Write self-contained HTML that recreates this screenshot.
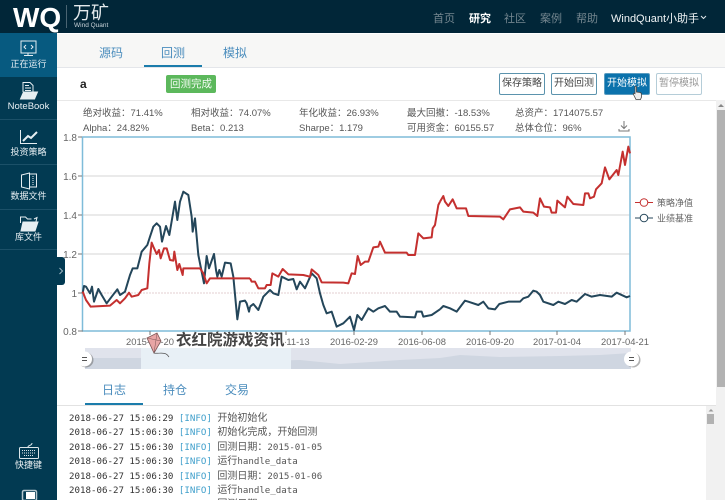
<!DOCTYPE html>
<html lang="zh">
<head>
<meta charset="utf-8">
<title>WindQuant</title>
<style>
html,body{margin:0;padding:0;width:725px;height:500px;overflow:hidden;background:#fff}
body{position:relative;font-family:"Liberation Sans","Noto Sans CJK SC",sans-serif;font-size:11px;color:#555}
.a{position:absolute;white-space:nowrap}
.btn{position:absolute;top:73px;height:20px;width:44px;border:1px solid #5b93ad;border-radius:2px;font-size:10px;line-height:20px;text-align:center;color:#444;background:#fff}
.s{position:absolute;white-space:nowrap;font-family:"Liberation Sans","Noto Sans CJK TC",sans-serif;font-size:9.5px;color:#555;line-height:14.5px}
.side{position:absolute;left:0;width:57px;text-align:center;color:#e8f0f4;font-size:9px;line-height:14px;white-space:nowrap}
.sep{position:absolute;left:0;width:57px;height:1px;background:#1b5068}
.tab{position:absolute;font-size:12px;color:#4b8dbd;transform:translateX(-50%);white-space:nowrap}
.nav{position:absolute;top:10px;font-size:11px;color:#74868f;transform:translateX(-50%);white-space:nowrap}
.log{position:absolute;left:69px;font:9.14px/14px "DejaVu Sans Mono","Noto Sans CJK TC",monospace;color:#333;white-space:pre}
.log b{font-weight:normal;color:#3f9fcb}
.log i{font-style:normal;color:#555;font-size:10px;font-family:"Noto Sans CJK TC",sans-serif}
.log em{font-style:normal;font-size:9.14px;font-family:"DejaVu Sans Mono",monospace}
</style>
</head>
<body>
<!-- top nav -->
<div class="a" style="left:0;top:0;width:725px;height:33px;background:#012638"></div>
<div class="a" style="left:13px;top:3px;font:bold 28px/30px 'Liberation Sans',sans-serif;color:#fff">WQ</div>
<div class="a" style="left:66px;top:5px;width:1px;height:23px;background:#4a6472"></div>
<div class="a" style="left:73px;top:3px;font-size:18px;line-height:20px;color:#e4e9ec">万矿</div>
<div class="a" style="left:74px;top:22px;font-size:6.500px;line-height:7px;color:#c8d2d8">Wind Quant</div>
<div class="nav" style="left:444px">首页</div>
<div class="nav" style="left:480px;color:#fff;font-weight:bold">研究</div>
<div class="nav" style="left:515px">社区</div>
<div class="nav" style="left:551px">案例</div>
<div class="nav" style="left:587px">帮助</div>
<div class="a" style="left:611px;top:10px;font-size:11px;color:#f0f4f6">WindQuant小助手</div>
<svg class="a" style="left:700px;top:15px" width="7" height="5"><path d="M1 1l2.500 2.500L6 1" fill="none" stroke="#dfe6ea" stroke-width="1"/></svg>

<!-- sidebar -->
<div class="a" style="left:0;top:33px;width:57px;height:467px;background:#023a52"></div>
<div class="a" style="left:0;top:33px;width:57px;height:44px;background:#075a80"></div>
<div class="sep" style="top:119px"></div><div class="sep" style="top:164px"></div><div class="sep" style="top:209px"></div><div class="sep" style="top:249px"></div>
<svg class="a" style="left:0;top:33px" width="57" height="220" fill="none" stroke="#e6eef2" stroke-width="1">
<rect x="21" y="8" width="15" height="12"/><path d="M26 12l-2 2 2 2M31 12l2 2-2 2M28 20v2M24 22.500h9"/>
<path d="M23 59v-9.500h7l3 3V59"/><path d="M20.500 66l3-7h14l-3 7z" fill="#e6eef2"/><path d="M25 52.500h4M25 55h6M25 57.500h6"/>
<path d="M20.500 97v13.500H37"/><path d="M23 108l5-5 3 2 6-6" stroke-width="2"/>
<path d="M21.500 142l8-2v16l-8-2zM30 141h6.500v13H30"/><path d="M33 143v9" stroke-dasharray="1 1"/>
<path d="M20.500 190v-6h5l2 2h4M34 186l3-1.500-1 4"/><path d="M21 198l2-9h15l-3 9z" fill="#e6eef2"/>
</svg>
<div class="side" style="top:57px">正在运行</div>
<div class="side" style="top:100px;font-size:9.500px">NoteBook</div>
<div class="side" style="top:145px">投资策略</div>
<div class="side" style="top:189px">数据文件</div>
<div class="side" style="top:230px">库文件</div>
<div class="a" style="left:57px;top:257px;width:8px;height:28px;background:#023a52;border-radius:0 3px 3px 0"></div>
<svg class="a" style="left:58px;top:267px" width="6" height="8"><path d="M1.500 1l3 3-3 3" fill="none" stroke="#9fb7c3" stroke-width="1"/></svg>
<svg class="a" style="left:17px;top:438px" width="24" height="62" fill="none" stroke="#dce6ea" stroke-width="1">
<rect x="2.500" y="9.500" width="19" height="11" rx="1"/><path d="M5 12.500h14M5 15h14M7 17.500h10" stroke-dasharray="1 1"/><path d="M11 9c0-2 4-1 4-4"/>
<rect x="5.500" y="52.500" width="14" height="10" rx="1.500" stroke-width="1.500" stroke="#b5c6ce"/><rect x="9" y="54" width="9" height="7" fill="#fff" stroke="none"/>
</svg>
<div class="side" style="top:458px;color:#f0f4f6">快捷键</div>

<!-- tab band -->
<div class="a" style="left:57px;top:34px;width:668px;height:33px;background:#f7f7f6;border-bottom:1px solid #e4e6ea"></div>
<div class="tab" style="left:111px;top:44px">源码</div>
<div class="tab" style="left:173px;top:44px">回测</div>
<div class="tab" style="left:235px;top:44px">模拟</div>
<div class="a" style="left:144px;top:65px;width:58px;height:2px;background:#1b7cab"></div>

<!-- toolbar -->
<div class="a" style="left:80px;top:77px;font-weight:bold;font-size:12px;color:#222">a</div>
<div class="a" style="left:166px;top:75px;width:50px;height:18px;background:#5cb85c;border-radius:2px;color:#f4fbf4;font-size:10.500px;line-height:18px;text-align:center">回测完成</div>
<div class="btn" style="left:499px">保存策略</div>
<div class="btn" style="left:551px">开始回测</div>
<div class="btn" style="left:604px;background:#0b72ac;border-color:#5a9cc0;color:#fff">开始模拟</div>
<div class="btn" style="left:656px;color:#999;border-color:#b5cdd8">暂停模拟</div>
<div class="a" style="left:57px;top:100px;width:659px;height:1px;background:#e8e8e8"></div>

<!-- stats -->
<div class="s" style="left:83px;top:107px">绝对收益：71.41%<br>Alpha：24.82%</div>
<div class="s" style="left:191px;top:107px">相对收益：74.07%<br>Beta：0.213</div>
<div class="s" style="left:299px;top:107px">年化收益：26.93%<br>Sharpe：1.179</div>
<div class="s" style="left:407px;top:107px">最大回撤：-18.53%<br>可用资金：60155.57</div>
<div class="s" style="left:515px;top:107px">总资产：1714075.57<br>总体仓位：96%</div>
<svg class="a" style="left:618px;top:120px" width="12" height="12" fill="none" stroke="#777" stroke-width="1"><path d="M6 1v7M3 5.500L6 8.500l3-3M1 9v2h10V9"/></svg>

<!-- chart -->
<svg class="a" style="left:0;top:130px" width="725" height="245">
<g transform="translate(0,-130)">
<rect x="83" y="137" width="547" height="194" fill="#fff"/>
<path d="M83 176H630M83 215H630M83 254H630" stroke="#e4e4e4" stroke-width="1.500"/>
<path d="M83 293H630" stroke="#e3cfd2" stroke-width="1" stroke-dasharray="2 1"/>
<path d="M82.500 137H630V331H82.500Z" fill="none" stroke="#7fbcd9" stroke-width="1.500"/>
<path d="M78 137h4M78 176h4M78 215h4M78 254h4M78 293h4M78 331h5M354 331v4M422 331v4M490 331v4M557 331v4M625 331v4M218 331v4M150 331v4M286 331v4" stroke="#777" stroke-width="1"/>
<g font-family="Liberation Sans,sans-serif" font-size="10" fill="#666" text-anchor="end">
<text x="77" y="141">1.8</text><text x="77" y="180">1.6</text><text x="77" y="219">1.4</text><text x="77" y="258">1.2</text><text x="77" y="297">1</text><text x="77" y="335">0.8</text>
</g>
<g font-family="Liberation Sans,sans-serif" font-size="9.400" fill="#666" text-anchor="middle">
<text x="150" y="345">2015-04-20</text><text x="286" y="345">2015-11-13</text><text x="354" y="345">2016-02-29</text><text x="422" y="345">2016-06-08</text><text x="490" y="345">2016-09-20</text><text x="557" y="345">2017-01-04</text><text x="625" y="345">2017-04-21</text>
</g>
<!-- navigator -->
<rect x="85" y="348" width="546" height="21" fill="#e0e3ec"/>
<path d="M85 358L140 358 180 353 220 358 240 360 260 361 300 360 340 364 400 360 440 358 460 355 500 357 560 356 600 355 631 353V369H85Z" fill="#cfd6e1"/>
<rect x="141" y="348" width="150" height="21" fill="#e8f0f6"/>
<rect x="175" y="332" width="110" height="16" fill="#fff"/>
<g fill="none" stroke-width="2" stroke-linejoin="round">
<!-- benchmark -->
<g stroke="#24465a">
<polyline transform="translate(60,130) scale(.33333)" stroke-width="6" points="68,490 72,468 78,470 90,490 96,470 102,515 115,477 125,495 140,520 155,500 172,478 180,495 195,485 210,435 218,415 232,415 245,365 262,345 270,320 280,290 290,280 300,290 306,335 318,288 328,315 345,215 352,270 360,215 370,185 385,195 395,260 398,305 405,265 415,375 422,410 432,460 440,378 447,415 462,372 468,420 472,440 478,420 485,440 495,398 512,400 520,440 532,568 540,515 555,512 560,520 567,545 570,530"/>
<polyline transform="translate(250,130) scale(.33333)" stroke-width="6" points="0,530 10,522 25,540 40,500 50,490 60,480 70,490 85,495 95,440 105,445 115,450 130,447 140,478 150,455 165,475 185,430 200,445 210,490 220,525 230,550 245,545 260,590 280,580 300,560 312,600 322,555 335,570 355,535 370,545 385,535 405,528 420,545 440,545 450,560 495,562 500,545 515,545 520,560 545,555 570,538"/>
<polyline transform="translate(440,130) scale(.33333)" stroke-width="6" points="0,538 10,528 30,535 50,545 75,512 85,515 115,525 130,515 145,535 165,538 178,522 205,515 240,515 250,505 265,500 280,482 290,485 300,495 310,515 340,525 355,515 375,522 395,510 410,515 435,492 455,500 480,495 515,500 530,488 560,502 570,498"/>
</g>
<!-- strategy -->
<g stroke="#c4302f">
<polyline transform="translate(60,130) scale(.33333)" stroke-width="6" points="68,485 78,510 92,530 150,527 170,510 180,520 195,505 207,488 215,500 235,495 245,480 262,475 268,400 275,338 280,350 290,372 297,360 302,385 312,355 320,355 330,390 340,392 343,365 352,420 358,402 368,435 370,415 420,415 430,430 440,460 450,445 570,445"/>
<polyline transform="translate(250,130) scale(.33333)" stroke-width="6" points="0,445 5,455 15,455 25,475 45,475 50,465 62,465 67,430 85,440 98,417 115,433 160,435 180,440 185,418 205,435 215,457 280,458 295,460 305,430 315,432 323,378 332,405 345,395 355,395 370,352 385,350 390,335 405,368 470,368 475,375 495,375 505,310 520,325 545,322 548,295 555,285 565,225 570,215"/>
<polyline transform="translate(440,130) scale(.33333)" stroke-width="6" points="0,215 10,198 15,215 25,228 38,208 50,235 78,235 85,258 180,260 190,268 210,238 240,232 250,245 280,248 292,258 300,205 312,230 330,232 335,248 348,248 352,212 375,232 382,200 400,222 430,225 435,190 445,190 450,205 462,200 468,178 485,160 495,112 508,148 530,120 535,135 548,65 555,105 565,50 570,70"/>
</g>
</g>
<!-- legend -->
<g fill="#fff" stroke-width="1">
<path d="M635 202.500h18" stroke="#c4302f"/><circle cx="644" cy="202.500" r="3.800" stroke="#c4302f"/>
<path d="M635 218h18" stroke="#24465a"/><circle cx="644" cy="218" r="3.800" stroke="#24465a"/>
</g>
<g font-family="Liberation Sans,Noto Sans CJK SC,sans-serif" font-size="9" fill="#666">
<text x="657" y="206">策略净值</text><text x="657" y="221.500">业绩基准</text>
</g>
<!-- handles -->
<g>
<circle cx="86" cy="360" r="7.500" fill="#666" opacity=".5"/><circle cx="84.500" cy="359" r="7.500" fill="#fff"/>
<path d="M82 357.500h5M82 360.500h5" stroke="#555" stroke-width="1"/>
<circle cx="633" cy="360" r="7.500" fill="#666" opacity=".5"/><circle cx="631.500" cy="359" r="7.500" fill="#fff"/>
<path d="M629 357.500h5M629 360.500h5" stroke="#555" stroke-width="1"/>
</g>
<!-- kite -->
<path d="M147 338l10-5 4 8-7 12z" fill="#e8a5a5" stroke="#7d5656" stroke-width=".8"/>
<path d="M147 338l14 3M157 333l-3 20" stroke="#7d5656" stroke-width=".5" fill="none"/>
<path d="M154 353c3 1 9-1 12 1 2 1 2 2 3 3" fill="none" stroke="#555" stroke-width=".7"/>
</g>
</svg>
<div class="a" style="left:176px;top:331px;font-size:15.500px;font-weight:bold;line-height:20px;color:#444">衣红院游戏资讯</div>

<!-- lower tabs -->
<div class="tab" style="left:114px;top:381px">日志</div>
<div class="tab" style="left:175px;top:381px">持仓</div>
<div class="tab" style="left:237px;top:381px">交易</div>
<div class="a" style="left:85px;top:403px;width:58px;height:2px;background:#1b7cab"></div>
<div class="a" style="left:57px;top:405px;width:659px;height:1px;background:#e2e2e2"></div>

<!-- log -->
<div class="log" style="top:410px">2018-06-27 15:06:29 <b>[INFO]</b> <i>开始初始化</i></div>
<div class="log" style="top:424px">2018-06-27 15:06:30 <b>[INFO]</b> <i>初始化完成，开始回测</i></div>
<div class="log" style="top:439px">2018-06-27 15:06:30 <b>[INFO]</b> <i>回测日期：<em>2015-01-05</em></i></div>
<div class="log" style="top:453px">2018-06-27 15:06:30 <b>[INFO]</b> <i>运行<em>handle_data</em></i></div>
<div class="log" style="top:468px">2018-06-27 15:06:30 <b>[INFO]</b> <i>回测日期：<em>2015-01-06</em></i></div>
<div class="log" style="top:482px">2018-06-27 15:06:30 <b>[INFO]</b> <i>运行<em>handle_data</em></i></div>
<div class="log" style="top:496px">2018-06-27 15:06:30 <b>[INFO]</b> <i>回测日期：<em>2015-01-07</em></i></div>

<!-- scrollbars -->
<div class="a" style="left:716px;top:100px;width:9px;height:400px;background:#f1f1f1"></div>
<div class="a" style="left:717px;top:110px;width:8px;height:277px;background:#b2b2b2"></div>
<svg class="a" style="left:717px;top:103px" width="8" height="5"><path d="M1 4l3-3 3 3z" fill="#888"/></svg>
<div class="a" style="left:706px;top:406px;width:10px;height:94px;background:#f1f1f1"></div>
<div class="a" style="left:707px;top:414px;width:7px;height:10px;background:#b2b2b2"></div>
<svg class="a" style="left:707px;top:408px" width="8" height="4"><path d="M1.500 3.500l2.500-2.500 2.500 2.500z" fill="#999"/></svg>

<!-- cursor -->
<svg class="a" style="left:632px;top:85px" width="11" height="15"><path d="M3 1.500c1-.5 1.500 0 1.500 1V7l3.500.5c1 .2 1.500.8 1.500 1.800V12l-1 2.500H4L1.500 9.500c-.5-1 .3-1.500 1.500-.8z" fill="#eee" stroke="#444" stroke-width=".8"/></svg>
</body>
</html>
